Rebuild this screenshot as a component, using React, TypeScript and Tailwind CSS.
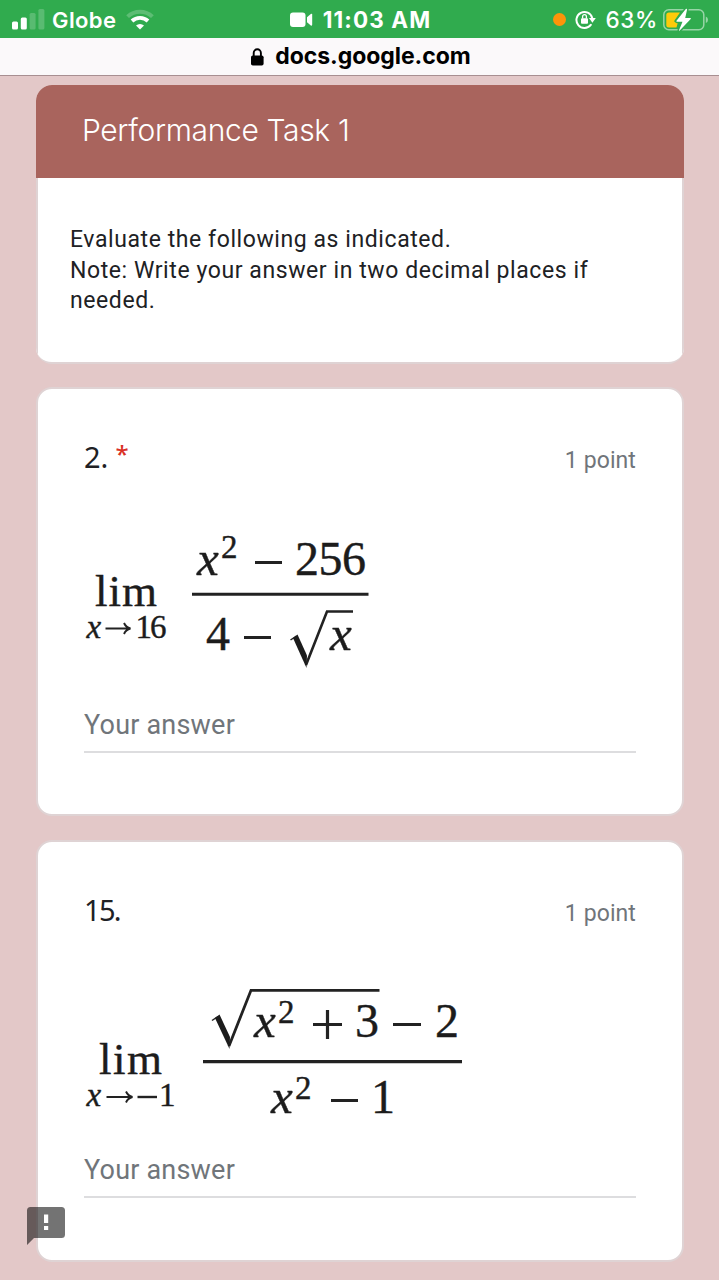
import type { ReactNode } from "react";

const ROBOTO = "font-['Roboto',sans-serif]";
const INTER = "font-['Inter',sans-serif]";

function SignalBars() {
	return (
		<svg width="33" height="21" viewBox="0 0 33 21" fill="#fff">
			<rect x="0" y="12.5" width="6" height="8" rx="1.5" />
			<rect x="8.8" y="8.5" width="6" height="12" rx="1.5" />
			<rect x="17.6" y="4" width="6" height="16.5" rx="1.5" opacity="0.2" />
			<rect x="26.4" y="0" width="6" height="20.5" rx="1.5" opacity="0.2" />
		</svg>
	);
}

function WifiIcon() {
	return (
		<svg width="28" height="21" viewBox="0 0 28 21" fill="none" stroke="#fff">
			<path d="M1.6 7.6a18 18 0 0 1 24.8 0" strokeWidth="4" opacity="0.22" />
			<path d="M6 12a11.8 11.8 0 0 1 16 0" strokeWidth="3.8" />
			<path d="M14 20.6l-4-4.1a6 6 0 0 1 8 0z" fill="#fff" stroke="none" />
		</svg>
	);
}

function CameraIcon() {
	return (
		<svg width="23" height="16" viewBox="0 0 23 16" fill="#fff">
			<rect x="0" y="0.5" width="15.5" height="14.5" rx="3" />
			<path d="M17 5.2l3.8-3.2c.7-.5 1.4-.2 1.4.6v10.2c0 .8-.7 1.1-1.4.6L17 10.3z" />
		</svg>
	);
}

function RotationLockIcon() {
	return (
		<svg width="21" height="19" viewBox="0 0 21 19" fill="none">
			<path
				d="M15.8 14.8A8 8 0 1 1 17.2 8"
				stroke="#fff"
				strokeWidth="2"
				strokeLinecap="round"
			/>
			<path d="M14 8h6.8l-3.4 4.8z" fill="#fff" />
			<rect x="6" y="8.3" width="7" height="5.5" rx="1" fill="#fff" />
			<path d="M7.6 8.5V6.6a1.9 1.9 0 0 1 3.8 0v1.9" stroke="#fff" strokeWidth="1.3" />
		</svg>
	);
}

function BatteryIcon() {
	return (
		<svg width="46" height="24" viewBox="0 0 46 24" fill="none">
			<rect x="0.8" y="1.8" width="40" height="20" rx="5" stroke="#fff" strokeWidth="1.5" opacity="0.5" />
			<path d="M42.8 8.5q2.2.8 2.2 3.3t-2.2 3.3z" fill="#fff" opacity="0.5" />
			<path d="M6 4.5H17L11.5 12.5V14H15L13.5 19.5H6Q3.3 19.5 3.3 17V7Q3.3 4.5 6 4.5z" fill="#fecb0a" />
			<path
				d="M22.8 1L13.5 12.8q-.5.9.4.9h5.6L16 22.2q-.1 1 .7.4L27.7 10.9q.6-.9-.4-.9h-5.1L24.1 1.5q0-1.2-1.3-.5z"
				fill="#fff"
				stroke="#30ab4e"
				strokeWidth="3"
				paintOrder="stroke"
			/>
		</svg>
	);
}

function LockIcon() {
	return (
		<svg width="13" height="18" viewBox="0 0 13 18" fill="none">
			<rect x="0" y="7.5" width="12.6" height="10" rx="1.8" fill="#000" />
			<path d="M2.7 8.5V4.9a3.6 3.6 0 0 1 7.2 0v3.6" stroke="#000" strokeWidth="1.9" />
		</svg>
	);
}

function StatusBar() {
	return (
		<div
			className={`${INTER} grid h-[38px] grid-cols-3 items-center bg-[#30ab4e] pl-3 pr-[10px] text-[22px] leading-[38px] text-white`}
		>
			<div className="flex items-center">
				<SignalBars />
				<span className="ml-[7px] w-[67px] whitespace-nowrap pt-px font-semibold tracking-[0.4px]">Globe</span>
				<span className="ml-[7px]">
					<WifiIcon />
				</span>
			</div>
			<div className="flex items-center justify-center gap-[10px]">
				<CameraIcon />
				<span className="whitespace-nowrap pt-px text-[22.5px] font-bold tracking-[1.1px]">11:03 AM</span>
			</div>
			<div className="flex items-center justify-end">
				<span className="size-[13px] rounded-full bg-[#fd9409]" />
				<span className="ml-[9px]">
					<RotationLockIcon />
				</span>
				<span className="ml-[10px] whitespace-nowrap pt-px text-[22.5px] font-medium tracking-[0.6px]">63%</span>
				<span className="ml-[5px]">
					<BatteryIcon />
				</span>
			</div>
		</div>
	);
}

function AddressBar() {
	return (
		<div className="flex h-[38px] items-center justify-center gap-[11px] border-b border-[#a88f91] bg-[#fbf9fa] pl-[3px]">
			<LockIcon />
			<span className={`${INTER} text-[23px] font-bold leading-none tracking-[-0.05px] text-black`}>
				docs.google.com
			</span>
		</div>
	);
}

const mathText = {
	fontFamily: "'Liberation Serif', serif",
	fill: "#1c1c1c",
	stroke: "#1c1c1c",
	strokeWidth: 0.4,
};

function LimitSixteen() {
	return (
		<svg width="300" height="150" viewBox="84 525 300 150" className="block">
			<g {...mathText}>
				<text x="95" y="606" fontSize="45" textLength="62">lim</text>
				<text x="86.5" y="638" fontSize="33" fontStyle="italic">x</text>
				<text x="135.5" y="638" fontSize="33" textLength="31">16</text>
				<text x="197" y="575" fontSize="49" fontStyle="italic">x</text>
				<text x="221" y="558" fontSize="33">2</text>
				<text x="295" y="575" fontSize="48" textLength="71">256</text>
				<text x="206" y="649.5" fontSize="48">4</text>
				<text x="330" y="650" fontSize="49" fontStyle="italic">x</text>
			</g>
			<g stroke="#222" fill="none">
				<path d="M105.5 628.5H130M124 623q2 4.5 6.5 5.5-4.5 1-6.5 5.5" strokeWidth="1.9" />
				<path d="M255 562.5H282M244 637.5H271" strokeWidth="3.2" />
				<path d="M192 594.3H368.5" strokeWidth="3" />
				<path d="M306 665L327 611.5H353" strokeWidth="2.6" />
				<path d="M290.5 640l6-4" strokeWidth="1.5" />
			</g>
			<path d="M293 638l4.5-3.5L307 655.5l-.5 12.5z" fill="#1c1c1c" />
		</svg>
	);
}

function LimitMinusOne() {
	return (
		<svg width="390" height="150" viewBox="84 978 390 150" className="block">
			<g {...mathText}>
				<text x="99" y="1074" fontSize="45" textLength="63">lim</text>
				<text x="86.5" y="1106" fontSize="33" fontStyle="italic">x</text>
				<text x="159" y="1106" fontSize="33">1</text>
				<text x="254" y="1037" fontSize="49" fontStyle="italic">x</text>
				<text x="278" y="1023" fontSize="33">2</text>
				<text x="355" y="1037" fontSize="48">3</text>
				<text x="435" y="1037" fontSize="48">2</text>
				<text x="271" y="1113" fontSize="49" fontStyle="italic">x</text>
				<text x="295" y="1098.5" fontSize="33">2</text>
				<text x="371" y="1113" fontSize="48">1</text>
			</g>
			<g stroke="#222" fill="none">
				<path d="M106.5 1097H132M126 1091.5q2 4.5 6.5 5.5-4.5 1-6.5 5.5" strokeWidth="1.9" />
				<path d="M137.5 1097H157" strokeWidth="2.4" />
				<path d="M313 1024.5H342M327.5 1010V1039M393 1024.5H421M331 1100.5H358" strokeWidth="3.2" />
				<path d="M203 1061.7H462" strokeWidth="3.2" />
				<path d="M229 1046L251 990.3H379.5" strokeWidth="2.8" />
				<path d="M212 1020.5l6-4" strokeWidth="1.5" />
			</g>
			<path d="M215 1018l4.5-3.5L230 1037l-.5 12z" fill="#1c1c1c" />
		</svg>
	);
}

interface QuestionCardProps {
	number: string;
	required?: boolean;
	className: string;
	numberClass?: string;
	formulaClass: string;
	answerClass: string;
	children: ReactNode;
}

function QuestionCard({
	number,
	required,
	className,
	numberClass,
	formulaClass,
	answerClass,
	children,
}: QuestionCardProps) {
	return (
		<section className={`rounded-[16px] border-2 border-[#dfd3d4] bg-white px-[46px] ${className}`}>
			<div className="flex h-[36px] items-center justify-between">
				<h2 className="flex items-center font-['Noto_Sans',sans-serif] text-[29px] leading-[36px] text-[#202124]">
					<span className={numberClass}>{number}</span>
					{required && (
						<span className="ml-[7px] pb-[7px] text-[24px] font-medium leading-[29px] text-[#d93025]">*</span>
					)}
				</h2>
				<span className={`${ROBOTO} pt-[7px] text-[23px] leading-[32px] tracking-[0.1px] text-[#70757a]`}>
					1 point
				</span>
			</div>
			<div className={formulaClass}>{children}</div>
			<div
				className={`${ROBOTO} h-[44px] border-b-2 border-[#dddddf] text-[27px] leading-[33px] tracking-[0.2px] text-[#70757a] ${answerClass}`}
			>
				Your answer
			</div>
		</section>
	);
}

function FeedbackBadge() {
	return (
		<svg className="absolute left-[27px] top-[1207px]" width="38" height="38" viewBox="0 0 38 38">
			<path
				d="M3.5 0H34.5Q38 0 38 3.5V27.5Q38 31 34.5 31H7L0 38V3.5Q0 0 3.5 0z"
				fill="#000"
				opacity="0.55"
			/>
			<path d="M17 7.5h4.2v8.5H17zM17 19h4.2v4H17z" fill="#fff" />
		</svg>
	);
}

export default function App() {
	return (
		<div className="relative flex h-[1280px] w-[719px] flex-col overflow-hidden bg-[#e3c8c8]">
			<StatusBar />
			<AddressBar />
			<main className="flex flex-col pl-[36px] pr-[35px] pt-[9px]">
				<header className="h-[279px] w-[648px] overflow-hidden rounded-[16px] border-b-2 border-[#dfd3d4] bg-white">
					<h1
						className={`${INTER} flex h-[93px] items-center bg-[#a9645d] pb-[2px] pl-[46px] text-[30px] font-[350] tracking-[-0.35px] text-white`}
					>
						Performance Task 1
					</h1>
					<p
						className={`${ROBOTO} h-[184px] whitespace-pre-line border-x-2 border-[#dfd3d4] pl-[32px] pt-[47px] text-[23px] leading-[30.5px] tracking-[0.58px] text-[#202124]`}
					>
						{"Evaluate the following as indicated.\nNote: Write your answer in two decimal places if\nneeded."}
					</p>
				</header>

				<QuestionCard
					number="2."
					required
					className="mt-[23px] h-[429px] pt-[50px]"
					formulaClass="mt-[50px] h-[150px]"
					answerClass="mt-[34px]"
				>
					<LimitSixteen />
				</QuestionCard>

				<QuestionCard
					number="15."
					className="mt-[24px] h-[422px] pt-[50px]"
					numberClass="tracking-[-1.7px]"
					formulaClass="mt-[50px] h-[150px]"
					answerClass="mt-[26px]"
				>
					<LimitMinusOne />
				</QuestionCard>
			</main>
			<FeedbackBadge />
		</div>
	);
}
